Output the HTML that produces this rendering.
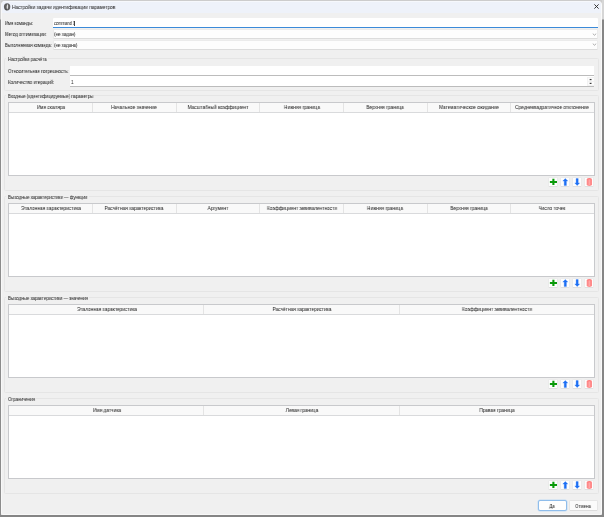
<!DOCTYPE html><html><head><meta charset="utf-8"><style>
*{box-sizing:border-box;margin:0;padding:0}
html,body{width:604px;height:517px;overflow:hidden;background:#cccccc;font-family:"Liberation Sans",sans-serif;}
.abs{position:absolute}
.t{position:absolute;white-space:nowrap;line-height:8px;height:8px;transform-origin:0 0;will-change:transform;-webkit-text-stroke:0.03px #2a2a2a}
.tc{position:absolute;white-space:nowrap;line-height:8px;height:8px;width:200px;text-align:center;transform-origin:50% 0;will-change:transform;-webkit-text-stroke:0.03px #2a2a2a}
.inp{position:absolute;background:#fff;border-bottom:1px solid #bcbcbc}
.cmb{position:absolute;background:#fdfdfd;border:1px solid #ebebeb;border-bottom-color:#dcdcdc;border-radius:1px}
.gb{position:absolute;border:1px solid #e5e5e5;border-radius:1.5px}
.tbl{position:absolute;background:#fff;border:1px solid #c8c9cc}
.hdr{position:absolute;left:0;top:0;right:0;height:10px;background:#f9f9f9;border-bottom:1px solid #d9dadc}
.col{position:absolute;top:0;height:9px;border-right:1px solid #e4e4e4}
.btn{position:absolute;width:10px;height:10px;background:#fdfdfd;border:1px solid #ebebeb;border-bottom-color:#e0e0e0;border-radius:1.5px}
</style></head><body>
<div class="abs" style="left:0;top:0;width:1px;height:517px;background:linear-gradient(#d2d2d2 0,#d2d2d2 19px,#8c8c8c 20px)"></div>
<div class="abs" style="left:602px;top:0;width:2px;height:517px;background:linear-gradient(#d6d6d6 0,#d6d6d6 19px,#868686 20px)"></div>
<div class="abs" style="left:0;top:515px;width:604px;height:2px;background:#858585"></div>
<div class="abs" style="left:1px;top:1px;width:601px;height:514px;background:#f0f0f0;border-radius:4px 4px 2px 2px;overflow:hidden;border-left:1px solid #f8f8f8;border-right:1px solid #fafafa;border-bottom:1px solid #f8f8f8">
<div class="abs" style="left:0;top:0;width:601px;height:12px;background:#eef2fa;border-top:1px solid #f6f8fc"></div>
</div>
<svg class="abs" style="left:3px;top:2px" width="9" height="10" viewBox="0 0 9 10"><ellipse cx="4.1" cy="4.8" rx="3.2" ry="3.6" fill="#606060"/><path d="M4.6 2.0C3.5 3 3.3 5.5 4.1 7.6C5.3 6.3 5.6 3.6 4.6 2.0Z" fill="#e0e0e0"/><path d="M2.2 6.8Q3 7.9 4.1 7.9" stroke="#3a3a3a" stroke-width="0.6" fill="none"/></svg>
<div class="t" style="left:12.3px;top:3.10px;font-size:5.4px;transform:scaleX(0.8780);color:#262626;letter-spacing:0.0px">Настройки задачи идентификации параметров</div>
<svg class="abs" style="left:594px;top:4.3px" width="5" height="5" viewBox="0 0 5 5"><path d="M0.4 0.4L4.6 4.6M4.6 0.4L0.4 4.6" stroke="#2a2a2a" stroke-width="0.95"/></svg>
<div class="t" style="left:4.9px;top:19.05px;font-size:5.4px;transform:scaleX(0.7950);color:#262626;letter-spacing:0.0px">Имя команды:</div>
<div class="t" style="left:5px;top:30.40px;font-size:5.4px;transform:scaleX(0.8100);color:#262626;letter-spacing:0.0px">Метод оптимизации:</div>
<div class="t" style="left:5px;top:41.30px;font-size:5.4px;transform:scaleX(0.7900);color:#262626;letter-spacing:0.0px">Выполняемая команда:</div>
<div class="abs" style="left:53px;top:18px;width:545px;height:10px;background:#fff;border-bottom:1px solid #3b8ad9;border-radius:1px 1px 0 0"></div>
<div class="t" style="left:53.7px;top:19.10px;font-size:5.4px;transform:scaleX(0.7500);color:#262626;letter-spacing:0.0px">command 1</div>
<div class="abs" style="left:74px;top:20.5px;width:0.6px;height:5.5px;background:#444"></div>
<div class="cmb" style="left:53px;top:29px;width:545px;height:10px"></div>
<div class="t" style="left:54.3px;top:30.30px;font-size:5.4px;transform:scaleX(0.8400);color:#262626;letter-spacing:0.0px">(не задан)</div>
<svg class="abs" style="left:592px;top:32.8px" width="5" height="3" viewBox="0 0 5 3"><path d="M0.8 0.7L2.5 2.2L4.2 0.7" stroke="#777" stroke-width="0.6" fill="none"/></svg>
<div class="cmb" style="left:53px;top:40px;width:545px;height:10px"></div>
<div class="t" style="left:54.3px;top:40.90px;font-size:5.4px;transform:scaleX(0.8200);color:#262626;letter-spacing:0.0px">(не задана)</div>
<svg class="abs" style="left:592px;top:43.4px" width="5" height="3" viewBox="0 0 5 3"><path d="M0.8 0.7L2.5 2.2L4.2 0.7" stroke="#777" stroke-width="0.6" fill="none"/></svg>
<div class="gb" style="left:4px;top:58px;width:595px;height:33px"></div>
<div class="abs" style="left:6px;top:56px;width:42px;height:5px;background:#f0f0f0"></div>
<div class="t" style="left:7.9px;top:55.15px;font-size:5.4px;transform:scaleX(0.8100);color:#262626;letter-spacing:0.0px">Настройки расчёта</div>
<div class="t" style="left:7.9px;top:67.20px;font-size:5.4px;transform:scaleX(0.8260);color:#262626;letter-spacing:0.0px">Относительная погрешность:</div>
<div class="t" style="left:8px;top:78.40px;font-size:5.4px;transform:scaleX(0.8350);color:#262626;letter-spacing:0.0px">Количество итераций:</div>
<div class="inp" style="left:70px;top:66px;width:524px;height:10px"></div>
<div class="inp" style="left:70px;top:76px;width:524px;height:11px"></div>
<div class="t" style="left:71px;top:78.00px;font-size:5.4px;transform:scaleX(0.8500);color:#262626;letter-spacing:0.0px">1</div>
<div class="abs" style="left:587px;top:77px;width:7px;height:9px;background:#f2f2f2"></div>
<div class="abs" style="left:588px;top:77.5px;width:5.5px;height:3.8px;background:#fcfcfc;border-radius:1px"></div>
<div class="abs" style="left:588px;top:81.7px;width:5.5px;height:3.8px;background:#fcfcfc;border-radius:1px"></div>
<svg class="abs" style="left:587px;top:77px" width="7" height="9" viewBox="0 0 7 9"><path d="M2.6 2.9L3.6 1.9L4.6 2.9Z M2.6 6L3.6 7L4.6 6Z" fill="#1a1a1a" stroke="#1a1a1a" stroke-width="0.35" stroke-linejoin="round"/></svg>
<div class="gb" style="left:4px;top:95px;width:595px;height:96px"></div>
<div class="abs" style="left:6px;top:93px;width:88.2px;height:6px;background:#f0f0f0"></div>
<div class="t" style="left:7.7px;top:91.90px;font-size:5.4px;transform:scaleX(0.8000);color:#262626;letter-spacing:0.0px">Входные (идентифицируемые) параметры</div>
<div class="tbl" style="left:8px;top:102px;width:587px;height:74px">
<div class="hdr">
<div class="abs" style="left:83px;top:0;width:1px;height:9px;background:#e4e4e4"></div>
<div class="abs" style="left:167px;top:0;width:1px;height:9px;background:#e4e4e4"></div>
<div class="abs" style="left:250px;top:0;width:1px;height:9px;background:#e4e4e4"></div>
<div class="abs" style="left:334px;top:0;width:1px;height:9px;background:#e4e4e4"></div>
<div class="abs" style="left:418px;top:0;width:1px;height:9px;background:#e4e4e4"></div>
<div class="abs" style="left:501px;top:0;width:1px;height:9px;background:#e4e4e4"></div>
</div></div>
<div class="tc" style="left:-49.21px;top:103.40px;font-size:5.4px;transform:scaleX(0.8800);color:#262626;letter-spacing:0.0px">Имя скаляра</div>
<div class="tc" style="left:34.36px;top:103.40px;font-size:5.4px;transform:scaleX(0.8800);color:#262626;letter-spacing:0.0px">Начальное значение</div>
<div class="tc" style="left:117.93px;top:103.40px;font-size:5.4px;transform:scaleX(0.8800);color:#262626;letter-spacing:0.0px">Масштабный коэффициент</div>
<div class="tc" style="left:201.50px;top:103.40px;font-size:5.4px;transform:scaleX(0.8800);color:#262626;letter-spacing:0.0px">Нижняя граница</div>
<div class="tc" style="left:285.07px;top:103.40px;font-size:5.4px;transform:scaleX(0.8800);color:#262626;letter-spacing:0.0px">Верхняя граница</div>
<div class="tc" style="left:368.64px;top:103.40px;font-size:5.4px;transform:scaleX(0.8800);color:#262626;letter-spacing:0.0px">Математическое ожидание</div>
<div class="tc" style="left:452.21px;top:103.40px;font-size:5.4px;transform:scaleX(0.8800);color:#262626;letter-spacing:0.0px">Среднеквадратичное отклонение</div>
<div class="btn" style="left:548px;top:177px"></div>
<div class="btn" style="left:560px;top:177px"></div>
<div class="btn" style="left:572px;top:177px"></div>
<div class="btn" style="left:584px;top:177px"></div>
<svg class="abs" style="left:540px;top:170px;overflow:visible" width="60" height="20" viewBox="540 170 60 20"><path d="M549.9 180.9H557V183H549.9Z M552.35 178.8H554.45V185.05H552.35Z" fill="#0a9a0a"/><path d="M565.3 178.5L567.8 181.1H566.4V185.6H564.2V181.1H562.8Z" fill="#1d6ff4" stroke="#1d6ff4" stroke-width="0.3" stroke-linejoin="round"/><path d="M577.2 185.6L579.6 182.9H578.2V178.6H576.1V182.9H574.8Z" fill="#1d6ff4" stroke="#1d6ff4" stroke-width="0.3" stroke-linejoin="round"/><path d="M586.7 179.6Q586.7 177.9 589.35 177.9Q592 177.9 592 179.6V184.6Q592 186 589.35 186Q586.7 186 586.7 184.6Z" fill="#ff8a8a"/><path d="M587.2 179.2Q589.35 178.2 591.5 179.2" stroke="#ff6f6f" stroke-width="0.6" fill="none"/><rect x="588.6" y="179.5" width="1.5" height="5.8" fill="#ffa6a6"/></svg>
<div class="gb" style="left:4px;top:196px;width:595px;height:96px"></div>
<div class="abs" style="left:6px;top:194px;width:82.5px;height:6px;background:#f0f0f0"></div>
<div class="t" style="left:7.7px;top:192.90px;font-size:5.4px;transform:scaleX(0.8250);color:#262626;letter-spacing:0.0px">Выходные характеристики — функции</div>
<div class="tbl" style="left:8px;top:203px;width:587px;height:74px">
<div class="hdr">
<div class="abs" style="left:83px;top:0;width:1px;height:9px;background:#e4e4e4"></div>
<div class="abs" style="left:167px;top:0;width:1px;height:9px;background:#e4e4e4"></div>
<div class="abs" style="left:250px;top:0;width:1px;height:9px;background:#e4e4e4"></div>
<div class="abs" style="left:334px;top:0;width:1px;height:9px;background:#e4e4e4"></div>
<div class="abs" style="left:418px;top:0;width:1px;height:9px;background:#e4e4e4"></div>
<div class="abs" style="left:501px;top:0;width:1px;height:9px;background:#e4e4e4"></div>
</div></div>
<div class="tc" style="left:-49.21px;top:204.40px;font-size:5.4px;transform:scaleX(0.8800);color:#262626;letter-spacing:0.0px">Эталонная характеристика</div>
<div class="tc" style="left:34.36px;top:204.40px;font-size:5.4px;transform:scaleX(0.8800);color:#262626;letter-spacing:0.0px">Расчётная характеристика</div>
<div class="tc" style="left:117.93px;top:204.40px;font-size:5.4px;transform:scaleX(0.8800);color:#262626;letter-spacing:0.0px">Аргумент</div>
<div class="tc" style="left:201.50px;top:204.40px;font-size:5.4px;transform:scaleX(0.8800);color:#262626;letter-spacing:0.0px">Коэффициент эквивалентности</div>
<div class="tc" style="left:285.07px;top:204.40px;font-size:5.4px;transform:scaleX(0.8800);color:#262626;letter-spacing:0.0px">Нижняя граница</div>
<div class="tc" style="left:368.64px;top:204.40px;font-size:5.4px;transform:scaleX(0.8800);color:#262626;letter-spacing:0.0px">Верхняя граница</div>
<div class="tc" style="left:452.21px;top:204.40px;font-size:5.4px;transform:scaleX(0.8800);color:#262626;letter-spacing:0.0px">Число точек</div>
<div class="btn" style="left:548px;top:278px"></div>
<div class="btn" style="left:560px;top:278px"></div>
<div class="btn" style="left:572px;top:278px"></div>
<div class="btn" style="left:584px;top:278px"></div>
<svg class="abs" style="left:540px;top:271px;overflow:visible" width="60" height="20" viewBox="540 170 60 20"><path d="M549.9 180.9H557V183H549.9Z M552.35 178.8H554.45V185.05H552.35Z" fill="#0a9a0a"/><path d="M565.3 178.5L567.8 181.1H566.4V185.6H564.2V181.1H562.8Z" fill="#1d6ff4" stroke="#1d6ff4" stroke-width="0.3" stroke-linejoin="round"/><path d="M577.2 185.6L579.6 182.9H578.2V178.6H576.1V182.9H574.8Z" fill="#1d6ff4" stroke="#1d6ff4" stroke-width="0.3" stroke-linejoin="round"/><path d="M586.7 179.6Q586.7 177.9 589.35 177.9Q592 177.9 592 179.6V184.6Q592 186 589.35 186Q586.7 186 586.7 184.6Z" fill="#ff8a8a"/><path d="M587.2 179.2Q589.35 178.2 591.5 179.2" stroke="#ff6f6f" stroke-width="0.6" fill="none"/><rect x="588.6" y="179.5" width="1.5" height="5.8" fill="#ffa6a6"/></svg>
<div class="gb" style="left:4px;top:297px;width:595px;height:96px"></div>
<div class="abs" style="left:6px;top:295px;width:83px;height:6px;background:#f0f0f0"></div>
<div class="t" style="left:7.7px;top:293.90px;font-size:5.4px;transform:scaleX(0.8170);color:#262626;letter-spacing:0.0px">Выходные характеристики — значения</div>
<div class="tbl" style="left:8px;top:304px;width:587px;height:74px">
<div class="hdr">
<div class="abs" style="left:194px;top:0;width:1px;height:9px;background:#e4e4e4"></div>
<div class="abs" style="left:390px;top:0;width:1px;height:9px;background:#e4e4e4"></div>
</div></div>
<div class="tc" style="left:6.50px;top:305.40px;font-size:5.4px;transform:scaleX(0.8800);color:#262626;letter-spacing:0.0px">Эталонная характеристика</div>
<div class="tc" style="left:201.50px;top:305.40px;font-size:5.4px;transform:scaleX(0.8800);color:#262626;letter-spacing:0.0px">Расчётная характеристика</div>
<div class="tc" style="left:396.50px;top:305.40px;font-size:5.4px;transform:scaleX(0.8800);color:#262626;letter-spacing:0.0px">Коэффициент эквивалентности</div>
<div class="btn" style="left:548px;top:379px"></div>
<div class="btn" style="left:560px;top:379px"></div>
<div class="btn" style="left:572px;top:379px"></div>
<div class="btn" style="left:584px;top:379px"></div>
<svg class="abs" style="left:540px;top:372px;overflow:visible" width="60" height="20" viewBox="540 170 60 20"><path d="M549.9 180.9H557V183H549.9Z M552.35 178.8H554.45V185.05H552.35Z" fill="#0a9a0a"/><path d="M565.3 178.5L567.8 181.1H566.4V185.6H564.2V181.1H562.8Z" fill="#1d6ff4" stroke="#1d6ff4" stroke-width="0.3" stroke-linejoin="round"/><path d="M577.2 185.6L579.6 182.9H578.2V178.6H576.1V182.9H574.8Z" fill="#1d6ff4" stroke="#1d6ff4" stroke-width="0.3" stroke-linejoin="round"/><path d="M586.7 179.6Q586.7 177.9 589.35 177.9Q592 177.9 592 179.6V184.6Q592 186 589.35 186Q586.7 186 586.7 184.6Z" fill="#ff8a8a"/><path d="M587.2 179.2Q589.35 178.2 591.5 179.2" stroke="#ff6f6f" stroke-width="0.6" fill="none"/><rect x="588.6" y="179.5" width="1.5" height="5.8" fill="#ffa6a6"/></svg>
<div class="gb" style="left:4px;top:398px;width:595px;height:96px"></div>
<div class="abs" style="left:6px;top:396px;width:29.9px;height:6px;background:#f0f0f0"></div>
<div class="t" style="left:7.7px;top:394.90px;font-size:5.4px;transform:scaleX(0.8200);color:#262626;letter-spacing:0.0px">Ограничения</div>
<div class="tbl" style="left:8px;top:405px;width:587px;height:74px">
<div class="hdr">
<div class="abs" style="left:194px;top:0;width:1px;height:9px;background:#e4e4e4"></div>
<div class="abs" style="left:390px;top:0;width:1px;height:9px;background:#e4e4e4"></div>
</div></div>
<div class="tc" style="left:6.50px;top:406.40px;font-size:5.4px;transform:scaleX(0.8800);color:#262626;letter-spacing:0.0px">Имя датчика</div>
<div class="tc" style="left:201.50px;top:406.40px;font-size:5.4px;transform:scaleX(0.8800);color:#262626;letter-spacing:0.0px">Левая граница</div>
<div class="tc" style="left:396.50px;top:406.40px;font-size:5.4px;transform:scaleX(0.8800);color:#262626;letter-spacing:0.0px">Правая граница</div>
<div class="btn" style="left:548px;top:480px"></div>
<div class="btn" style="left:560px;top:480px"></div>
<div class="btn" style="left:572px;top:480px"></div>
<div class="btn" style="left:584px;top:480px"></div>
<svg class="abs" style="left:540px;top:473px;overflow:visible" width="60" height="20" viewBox="540 170 60 20"><path d="M549.9 180.9H557V183H549.9Z M552.35 178.8H554.45V185.05H552.35Z" fill="#0a9a0a"/><path d="M565.3 178.5L567.8 181.1H566.4V185.6H564.2V181.1H562.8Z" fill="#1d6ff4" stroke="#1d6ff4" stroke-width="0.3" stroke-linejoin="round"/><path d="M577.2 185.6L579.6 182.9H578.2V178.6H576.1V182.9H574.8Z" fill="#1d6ff4" stroke="#1d6ff4" stroke-width="0.3" stroke-linejoin="round"/><path d="M586.7 179.6Q586.7 177.9 589.35 177.9Q592 177.9 592 179.6V184.6Q592 186 589.35 186Q586.7 186 586.7 184.6Z" fill="#ff8a8a"/><path d="M587.2 179.2Q589.35 178.2 591.5 179.2" stroke="#ff6f6f" stroke-width="0.6" fill="none"/><rect x="588.6" y="179.5" width="1.5" height="5.8" fill="#ffa6a6"/></svg>
<div class="abs" style="left:538px;top:500px;width:29px;height:11px;background:#fefefe;border:1px solid #8fbdeb;box-shadow:0 0 0 0.5px #c2dbf4;border-radius:2px"></div>
<div class="tc" style="left:452.30px;top:502.20px;font-size:5.4px;transform:scaleX(0.8200);color:#262626;letter-spacing:0.0px">Да</div>
<div class="abs" style="left:569px;top:500px;width:28.5px;height:11px;background:#fbfbfb;border:1px solid #e6e6e6;border-bottom-color:#dcdcdc;border-radius:1.5px"></div>
<div class="tc" style="left:482.50px;top:502.20px;font-size:5.4px;transform:scaleX(0.8100);color:#262626;letter-spacing:0.0px">Отмена</div>
</body></html>
